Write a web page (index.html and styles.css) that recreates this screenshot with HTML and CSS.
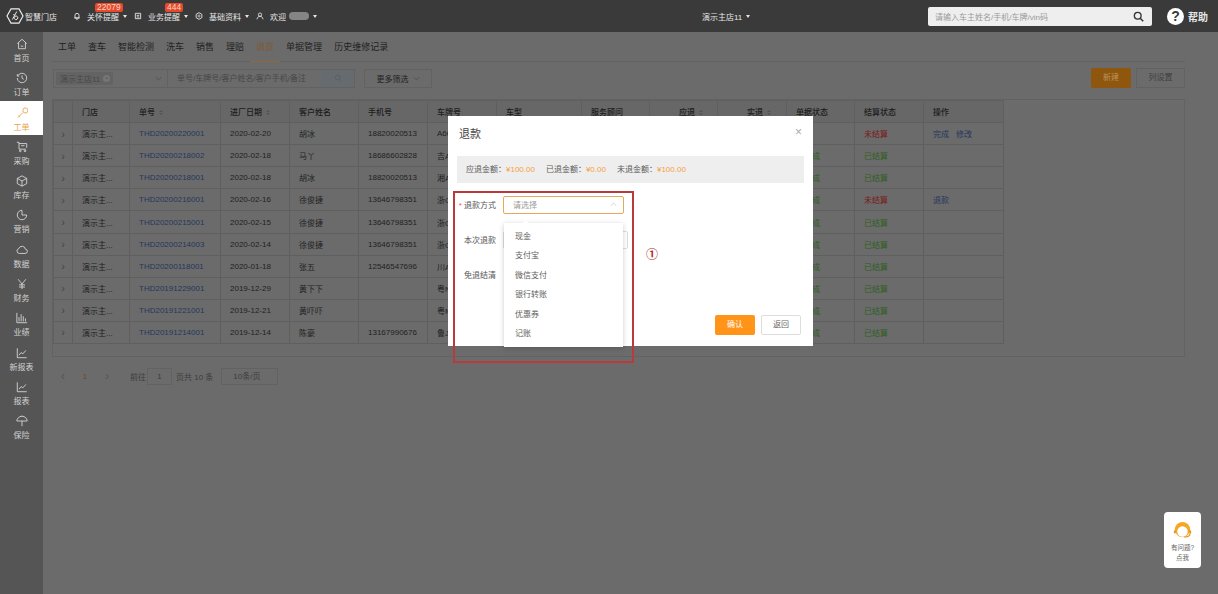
FILE: index.html
```html
<!DOCTYPE html>
<html lang="zh-CN">
<head>
  <meta charset="UTF-8">
  <title>退款</title>
  <link rel="stylesheet" href="styles.css">
</head>
<body>
  <header class="topbar">
    <div class="brand">
      <svg class="brand-logo" viewBox="0 0 20 18"><path d="M5.5 1h9L19 9l-4.500 8h-9L1 9z" fill="none" stroke="#eee" stroke-width="1.300"/><path d="M7 13 12 4M9.500 7.500H8M12.500 9.500a2 2 0 1 1-3.200 2.200 2 2 0 0 1 3.200-2.200z" fill="none" stroke="#eee" stroke-width="1.100"/></svg>
      <span>智慧门店</span>
    </div>
    <nav class="topnav">
      <div class="topnav-item">
        <svg class="top-icon" viewBox="0 0 12 12"><path d="M3 9V5a3 3 0 0 1 6 0v4zM2 9h8M5 11h2" fill="none" stroke="#eee" stroke-width="1.300"/></svg>
        <span>关怀提醒</span><i class="caret"></i>
        <b class="badge badge-wide">22079</b>
      </div>
      <div class="topnav-item">
        <svg class="top-icon" viewBox="0 0 12 12"><path d="M2 2h8v8H2zM4 5h4M4 7.500h4" fill="none" stroke="#eee" stroke-width="1.300"/></svg>
        <span>业务提醒</span><i class="caret"></i>
        <b class="badge badge-narrow">444</b>
      </div>
      <div class="topnav-item">
        <svg class="top-icon" viewBox="0 0 12 12"><path d="M6 1l4.300 2.500v5L6 11 1.700 8.500v-5z" fill="none" stroke="#eee" stroke-width="1.300"/><circle cx="6" cy="6" r="1.600" fill="none" stroke="#eee"/></svg>
        <span>基础资料</span><i class="caret"></i>
      </div>
      <div class="topnav-item">
        <svg class="top-icon" viewBox="0 0 12 12"><circle cx="6" cy="4" r="2.500" fill="none" stroke="#eee" stroke-width="1.200"/><path d="M1.500 11c.5-3 2-4.500 4.500-4.500s4 1.500 4.500 4.500" fill="none" stroke="#eee" stroke-width="1.200"/></svg>
        <span>欢迎</span><span class="user-blur"></span><i class="caret"></i>
      </div>
    </nav>
    <div class="store-switch"><span>演示主店11</span><i class="caret"></i></div>
    <div class="top-search">
      <span>请输入车主姓名/手机/车牌/vin码</span>
      <svg class="top-search-icon" viewBox="0 0 14 14"><circle cx="6" cy="6" r="4.300" fill="none" stroke="#333" stroke-width="1.700"/><path d="M9.200 9.200 13 13" stroke="#333" stroke-width="2"/></svg>
    </div>
    <div class="help">
      <span class="help-mark">?</span>
      <span>帮助</span>
    </div>
  </header>

  <div class="layout">
    <aside class="sidebar">
      <a class="side-item"><svg viewBox="0 0 14 14"><path d="M1.500 6.500 7 1.500l5.500 5M3 5.500V12.500h8V5.500M5.500 9.500h3"/></svg>首页</a>
      <a class="side-item"><svg viewBox="0 0 14 14"><path d="M2.200 4.300A5.500 5.500 0 1 1 1.500 7M1.500 2.500v2.300h2.300M7 4v3.300l2 1.200"/></svg>订单</a>
      <a class="side-item active"><svg viewBox="0 0 14 14"><path d="M8 6.500 2 12.500M3 10l1.500 1.500M8 3.500a3 3 0 1 1 2.500 3.500 3 3 0 0 1-2.500-3.500z"/></svg>工单</a>
      <a class="side-item"><svg viewBox="0 0 14 14"><path d="M1 1.500h2.500v8h8M3.500 3h9v5M6 5.500h4"/><circle cx="5" cy="11.500" r="1"/><circle cx="10.500" cy="11.500" r="1"/></svg>采购</a>
      <a class="side-item"><svg viewBox="0 0 14 14"><path d="M7 1l5.500 3v6L7 13l-5.500-3V4zM1.500 4 7 7l5.500-3M7 7v6"/></svg>库存</a>
      <a class="side-item"><svg viewBox="0 0 14 14"><path d="M7 1.500v5.500h5.500A5.500 5.500 0 1 1 7 1.500z"/></svg>营销</a>
      <a class="side-item"><svg viewBox="0 0 14 14"><path d="M4 11h6.500a2.500 2.500 0 0 0 .5-5 4 4 0 0 0-7.700-.7A2.900 2.900 0 0 0 4 11z"/></svg>数据</a>
      <a class="side-item"><svg viewBox="0 0 14 14"><path d="M2.500 1.500 7 7l4.500-5.500M7 7v6M3.500 8h7M3.500 10.500h7"/></svg>财务</a>
      <a class="side-item"><svg viewBox="0 0 14 14"><path d="M1 1v11.500h12M3.500 11V6M6 11V2.500M8.500 11V5M11 11V7.500"/></svg>业绩</a>
      <a class="side-item"><svg viewBox="0 0 14 14"><path d="M1.500 1.500v11h11M3.500 9.500l2.500-3 2 1.500 3.500-4"/></svg>新报表</a>
      <a class="side-item"><svg viewBox="0 0 14 14"><path d="M1.500 1.500v11h11M3.500 9.500l2.500-3 2 1.500 3.500-4"/></svg>报表</a>
      <a class="side-item"><svg viewBox="0 0 14 14"><path d="M1 7a6 5.500 0 0 1 12 0zM7 7v6M7 1V.5"/></svg>保险</a>
    </aside>

    <main class="content">
      <div class="tabs">
        <span class="tab">工单</span>
        <span class="tab">查车</span>
        <span class="tab">智能检测</span>
        <span class="tab">洗车</span>
        <span class="tab">销售</span>
        <span class="tab">理赔</span>
        <span class="tab current">退货</span>
        <span class="tab">单据管理</span>
        <span class="tab">历史维修记录</span>
      </div>

      <div class="filters">
        <div class="filter-group">
          <div class="filter-select">
            <span class="tag">演示主店11<i class="tag-x">×</i></span>
            <svg class="chev" viewBox="0 0 10 6"><path d="M1 1l4 4 4-4"/></svg>
          </div>
          <div class="filter-input">单号/车牌号/客户姓名/客户手机/备注</div>
          <div class="filter-btn"><svg viewBox="0 0 12 12"><circle cx="5.500" cy="5.500" r="3.500"/><path d="M8 8l2.500 2.500"/></svg></div>
        </div>
        <div class="more-btn">更多筛选 <svg class="chev" viewBox="0 0 10 6"><path d="M1 1l4 4 4-4"/></svg></div>
        <div class="filter-actions">
          <span class="new-btn">新建</span>
          <span class="col-btn">列设置</span>
        </div>
      </div>

      <div class="table-wrap">
        <table class="orders">
          <colgroup>
            <col class="c-exp"><col class="c-store"><col class="c-no"><col class="c-69"><col class="c-69"><col class="c-69"><col class="c-69"><col class="c-85"><col class="c-68"><col class="c-68"><col class="c-69"><col class="c-68"><col class="c-69"><col class="c-80">
          </colgroup>
          <thead>
            <tr>
              <th></th><th>门店</th><th>单号 <i class="sort"></i></th><th>进厂日期 <i class="sort"></i></th><th>客户姓名</th><th>手机号</th><th>车牌号</th><th>车型</th><th>服务顾问</th><th class="num">应退 <i class="sort"></i></th><th class="num">实退 <i class="sort"></i></th><th>单据状态</th><th>结算状态</th><th>操作</th>
            </tr>
          </thead>
          <tbody>
            <tr><td class="exp">›</td><td>演示主...</td><td class="no">THD20200220001</td><td>2020-02-20</td><td>胡冰</td><td>18820020513</td><td>A66</td><td></td><td></td><td></td><td></td><td></td><td class="unpaid">未结算</td><td class="ops"><a>完成</a><a>修改</a></td></tr>
            <tr><td class="exp">›</td><td>演示主...</td><td class="no">THD20200218002</td><td>2020-02-18</td><td>马丫</td><td>18686602828</td><td>吉A</td><td></td><td></td><td></td><td></td><td class="done">已完成</td><td class="paid">已结算</td><td></td></tr>
            <tr><td class="exp">›</td><td>演示主...</td><td class="no">THD20200218001</td><td>2020-02-18</td><td>胡冰</td><td>18820020513</td><td>湘A</td><td></td><td></td><td></td><td></td><td class="done">已完成</td><td class="paid">已结算</td><td></td></tr>
            <tr><td class="exp">›</td><td>演示主...</td><td class="no">THD20200216001</td><td>2020-02-16</td><td>徐俊捷</td><td>13646798351</td><td>浙C</td><td></td><td></td><td></td><td></td><td class="done">已完成</td><td class="unpaid">未结算</td><td class="ops"><a>退款</a></td></tr>
            <tr><td class="exp">›</td><td>演示主...</td><td class="no">THD20200215001</td><td>2020-02-15</td><td>徐俊捷</td><td>13646798351</td><td>浙C</td><td></td><td></td><td></td><td></td><td class="done">已完成</td><td class="paid">已结算</td><td></td></tr>
            <tr><td class="exp">›</td><td>演示主...</td><td class="no">THD20200214003</td><td>2020-02-14</td><td>徐俊捷</td><td>13646798351</td><td>浙C</td><td></td><td></td><td></td><td></td><td class="done">已完成</td><td class="paid">已结算</td><td></td></tr>
            <tr><td class="exp">›</td><td>演示主...</td><td class="no">THD20200118001</td><td>2020-01-18</td><td>张五</td><td>12546547696</td><td>川A</td><td></td><td></td><td></td><td></td><td class="done">已完成</td><td class="paid">已结算</td><td></td></tr>
            <tr><td class="exp">›</td><td>演示主...</td><td class="no">THD20191229001</td><td>2019-12-29</td><td>黄下下</td><td></td><td>粤N</td><td></td><td></td><td></td><td></td><td class="done">已完成</td><td class="paid">已结算</td><td></td></tr>
            <tr><td class="exp">›</td><td>演示主...</td><td class="no">THD20191221001</td><td>2019-12-21</td><td>黄吓吓</td><td></td><td>粤M</td><td></td><td></td><td></td><td></td><td class="done">已完成</td><td class="paid">已结算</td><td></td></tr>
            <tr><td class="exp">›</td><td>演示主...</td><td class="no">THD20191214001</td><td>2019-12-14</td><td>陈豪</td><td>13167990676</td><td>鲁J</td><td></td><td></td><td></td><td></td><td class="done">已完成</td><td class="paid">已结算</td><td></td></tr>
          </tbody>
        </table>
      </div>

      <div class="pager">
        <span class="pg-arrow">‹</span>
        <span class="pg-current">1</span>
        <span class="pg-arrow">›</span>
        <span class="pg-goto">前往</span>
        <span class="pg-input">1</span>
        <span>页共 10 条</span>
        <span class="pg-size">10条/页</span>
      </div>

      <div class="modal-layer">
        <section class="modal">
          <div class="modal-head">
            <h2>退款</h2>
            <span class="modal-close">×</span>
          </div>
          <div class="summary">
            <span>应退金额：<em>¥100.00</em></span>
            <span>已退金额：<em>¥0.00</em></span>
            <span>未退金额：<em>¥100.00</em></span>
          </div>
          <div class="form-rows">
            <div class="form-row">
              <label><i>*</i> 退款方式</label>
              <div class="select-box">
                <span>请选择</span>
                <svg class="chev" viewBox="0 0 10 6"><path d="M1 5l4-4 4 4"/></svg>
              </div>
            </div>
            <div class="form-row">
              <label>本次退款</label>
              <div class="amount-box"></div>
            </div>
            <div class="form-row">
              <label>免退结清</label>
            </div>
          </div>
          <div class="modal-foot">
            <span class="btn-ok">确认</span>
            <span class="btn-back">返回</span>
          </div>

          <ul class="dropdown">
            <li>现金</li>
            <li>支付宝</li>
            <li>微信支付</li>
            <li>银行转账</li>
            <li>优惠券</li>
            <li>记账</li>
          </ul>
          <div class="annotation"></div>
          <span class="annotation-no">①</span>
        </section>
      </div>

      <div class="support">
        <svg viewBox="0 0 22 22"><circle cx="11" cy="10" r="8" fill="#f5a623"/><circle cx="11" cy="12" r="5.500" fill="#fff"/><path d="M3 11v3M19 11v3" stroke="#e98f12" stroke-width="2"/><path d="M19 14c0 3-3 4-6 4" fill="none" stroke="#e98f12" stroke-width="1.200"/></svg>
        <span>有问题?</span>
        <span>点我</span>
      </div>
    </main>
  </div>
</body>
</html>
```

FILE: styles.css
```css
* {
  box-sizing: border-box;
}

html, body {
  height: 100%;
}

body {
  margin: 0;
  overflow: hidden;
  font-family: "Liberation Sans", "Noto Sans CJK SC", sans-serif;
  font-size: 8px;
  color: #1f1f1f;
  background-color: #6b6b6b;
}

.topbar {
  display: flex;
  align-items: center;
  height: 32px;
  background-color: #3a3a3a;
  color: #e6e6e6;
  position: relative;
}

.brand {
  display: flex;
  align-items: center;
  gap: 1px;
  width: 73px;
  padding-left: 6px;
}

.brand-logo {
  width: 18px;
  height: 16px;
}

.topnav {
  display: flex;
  width: 629px;
}

.topnav-item {
  display: flex;
  align-items: center;
  position: relative;
  margin-right: 7px;
}

.top-icon {
  width: 8px;
  height: 8px;
  margin-right: 6px;
}

.caret {
  width: 0;
  height: 0;
  margin-left: 4px;
  border: 2px solid transparent;
  border-top: 3px solid #e6e6e6;
  border-bottom: 0;
}

.badge {
  position: absolute;
  top: -8px;
  height: 9px;
  padding: 0 2px;
  border-radius: 2px;
  background-color: #e8492a;
  color: #f5d8c8;
  font-size: 8.500px;
  font-weight: normal;
  line-height: 9px;
}

.badge-wide {
  left: 22px;
}

.badge-narrow {
  left: 31px;
}

.user-blur {
  width: 20px;
  height: 8px;
  margin-left: 3px;
  border-radius: 4px;
  background-color: #858585;
}

.store-switch {
  display: flex;
  align-items: center;
  width: 226px;
}

.top-search {
  display: flex;
  align-items: center;
  justify-content: space-between;
  width: 224px;
  height: 19px;
  padding: 0 8px 0 7px;
  border-radius: 2px;
  background-color: #eee;
  color: #9a9a9a;
}

.top-search-icon {
  width: 11px;
  height: 11px;
}

.help {
  display: flex;
  align-items: center;
  gap: 4px;
  margin-left: 15px;
  font-size: 10px;
  font-weight: bold;
}

.help-mark {
  width: 17px;
  height: 17px;
  border-radius: 50%;
  background-color: #fff;
  color: #3a3a3a;
  font-size: 14px;
  line-height: 17px;
  text-align: center;
}

.layout {
  display: flex;
  height: 562px;
}

.sidebar {
  flex: none;
  width: 43px;
  background-color: #555;
}

.side-item {
  display: flex;
  flex-direction: column;
  align-items: center;
  height: 34.300px;
  padding-top: 6px;
  color: #d2d2d2;
  line-height: 11px;
}

.side-item svg {
  width: 12px;
  height: 12px;
  margin-bottom: 3px;
  fill: none;
  stroke: #dcdcdc;
  stroke-width: 1;
}

.side-item.active {
  background-color: #fff;
  color: #e8a04a;
}

.side-item.active svg {
  stroke: #e8a04a;
}

.content {
  flex: 1;
  position: relative;
  padding: 0 33px 0 9px;
}

.tabs {
  display: flex;
  height: 30px;
  border-bottom: 1px solid #626262;
  font-size: 9px;
}

.tab {
  height: 30px;
  padding: 0 6px;
  line-height: 30px;
}

.tab.current {
  color: #7f5a30;
  border-bottom: 1px solid #8f6a38;
}

.filters {
  display: flex;
  align-items: center;
  height: 20px;
  margin-top: 6px;
}

.filter-group {
  display: flex;
  width: 302px;
  height: 19px;
  margin-left: 1px;
  border: 1px solid #626262;
  color: #474747;
}

.filter-select {
  display: flex;
  align-items: center;
  justify-content: space-between;
  width: 114px;
  padding: 0 5px 0 2px;
  border-right: 1px solid #626262;
}

.tag {
  display: flex;
  align-items: center;
  gap: 3px;
  padding: 1px 3px 1px 4px;
  background-color: #636363;
}

.tag-x {
  width: 7px;
  height: 7px;
  border-radius: 50%;
  background-color: #767676;
  color: #5a5a5a;
  font-size: 6px;
  font-style: normal;
  line-height: 7px;
  text-align: center;
}

.chev {
  width: 7px;
  height: 5px;
  fill: none;
  stroke: #484848;
  stroke-width: 1;
}

.filter-input {
  flex: 1;
  padding-left: 9px;
  line-height: 17px;
}

.filter-btn {
  display: flex;
  align-items: center;
  justify-content: center;
  width: 33px;
  background-color: #666b70;
}

.filter-btn svg {
  width: 8px;
  height: 8px;
  fill: none;
  stroke: #4d5a66;
}

.more-btn {
  display: flex;
  align-items: center;
  justify-content: center;
  gap: 4px;
  width: 68px;
  height: 19px;
  margin-left: 9px;
  border: 1px solid #626262;
  font-size: 8px;
}

.filter-actions {
  display: flex;
  gap: 5px;
  margin-left: auto;
}

.new-btn {
  width: 40px;
  height: 20px;
  border-radius: 2px;
  background-color: #8f560d;
  color: #b8935f;
  line-height: 20px;
  text-align: center;
}

.col-btn {
  width: 49px;
  height: 20px;
  border: 1px solid #626262;
  color: #3f3f3f;
  line-height: 18px;
  text-align: center;
}

.table-wrap {
  height: 258px;
  margin-top: 11px;
  border: 1px solid #626262;
}

.orders {
  width: 950px;
  table-layout: fixed;
  border-collapse: collapse;
}

.c-exp { width: 19px; }
.c-store { width: 57px; }
.c-no { width: 91px; }
.c-69 { width: 69px; }
.c-85 { width: 85px; }
.c-68 { width: 68px; }
.c-80 { width: 80px; }

.orders th,
.orders td {
  height: 22.100px;
  padding: 0 0 0 9px;
  border: 1px solid #5f5f5f;
  text-align: left;
  white-space: nowrap;
  overflow: hidden;
}

.orders th {
  background-color: #676767;
  font-weight: 500;
  color: #1c1c1c;
}

.orders th.num {
  padding-left: 29px;
}

.sort {
  display: inline-flex;
  flex-direction: column;
  gap: 1px;
  margin-left: 2px;
  vertical-align: middle;
}

.sort::before,
.sort::after {
  content: "";
  width: 0;
  height: 0;
  border: 2px solid transparent;
}

.sort::before {
  border-top: 0;
  border-bottom: 2px solid #555;
}

.sort::after {
  border-bottom: 0;
  border-top: 2px solid #555;
}

.orders td.exp {
  padding: 0;
  color: #454545;
  font-size: 11px;
  text-align: center;
}

.no {
  color: #26375c;
}

.done,
.paid {
  color: #2f5f20;
}

.unpaid {
  color: #7a1818;
}

.ops a {
  margin-right: 7px;
  color: #26375c;
}

.pager {
  display: flex;
  align-items: center;
  height: 20px;
  margin-top: 9px;
  color: #3d3d3d;
}

.pg-arrow {
  width: 22px;
  color: #555;
  font-size: 12px;
  text-align: center;
}

.pg-current {
  width: 22px;
  color: #7a4618;
  text-align: center;
}

.pg-goto {
  margin-left: 12px;
}

.pg-input {
  width: 25px;
  height: 17px;
  margin: 0 4px 0 1px;
  border: 1px solid #626262;
  line-height: 15px;
  text-align: center;
}

.pg-size {
  width: 57px;
  height: 17px;
  margin-left: 8px;
  padding-left: 11px;
  border: 1px solid #626262;
  line-height: 15px;
}

.modal-layer {
  position: absolute;
  top: 84px;
  left: 0;
  width: 100%;
  display: flex;
  justify-content: center;
}

.modal {
  position: relative;
  width: 365px;
  height: 230px;
  padding: 0 9px;
  background-color: #fff;
  color: #5c5c5c;
}

.modal-head {
  display: flex;
  justify-content: space-between;
  height: 40px;
  padding: 10px 2px 0;
}

.modal-head h2 {
  margin: 0;
  font-size: 11px;
  font-weight: normal;
  color: #444;
  line-height: 16px;
}

.modal-close {
  color: #aaa;
  font-size: 12px;
  line-height: 12px;
}

.summary {
  display: flex;
  gap: 11px;
  height: 27px;
  padding-left: 9px;
  background-color: #eee;
  line-height: 27px;
}

.summary em {
  color: #f5a142;
  font-style: normal;
}

.form-rows {
  margin-top: 4px;
}

.form-row {
  display: flex;
  align-items: center;
  height: 35px;
}

.form-row label {
  width: 39px;
  margin-right: 7px;
  text-align: right;
  color: #555;
  white-space: nowrap;
}

.form-row label i {
  color: #e55;
  font-style: normal;
}

.select-box {
  display: flex;
  align-items: center;
  justify-content: space-between;
  width: 121px;
  height: 18px;
  padding: 0 6px 0 9px;
  border: 1px solid #e6a95a;
  border-radius: 2px;
  color: #9a9a9a;
}

.select-box .chev {
  stroke: #c0c4cc;
}

.amount-box {
  width: 125px;
  height: 18px;
  border: 1px solid #ddd;
  border-radius: 2px;
}

.modal-foot {
  display: flex;
  justify-content: flex-end;
  gap: 6px;
  margin-top: 23px;
  padding-right: 3px;
}

.btn-ok,
.btn-back {
  width: 40px;
  height: 20px;
  border-radius: 2px;
  line-height: 20px;
  text-align: center;
}

.btn-ok {
  background-color: #ff9419;
  color: #fff;
}

.btn-back {
  border: 1px solid #ddd;
  line-height: 18px;
  color: #666;
}

.dropdown {
  position: absolute;
  top: 107px;
  left: 56px;
  width: 119px;
  height: 124px;
  margin: 0;
  padding: 4px 0;
  list-style: none;
  background-color: #fff;
  box-shadow: 0 1px 5px rgba(0, 0, 0, 0.2);
}

.dropdown::before {
  content: "";
  position: absolute;
  top: -2px;
  left: 19px;
  width: 5px;
  height: 5px;
  background-color: #fff;
  transform: rotate(45deg);
}

.dropdown li {
  height: 19.400px;
  padding-left: 11px;
  line-height: 19.400px;
  color: #606060;
}

.annotation {
  position: absolute;
  top: 75px;
  left: 5px;
  width: 181px;
  height: 172px;
  border: 2px solid #b83a3a;
}

.annotation-no {
  position: absolute;
  top: 131px;
  left: 198px;
  color: #b02a2a;
  font-size: 12px;
  font-weight: bold;
  line-height: 16px;
}

.support {
  position: absolute;
  top: 480px;
  left: 1121px;
  display: flex;
  flex-direction: column;
  align-items: center;
  width: 37px;
  height: 56px;
  padding-top: 8px;
  border-radius: 4px;
  background-color: #fff;
  color: #666;
  font-size: 6.500px;
  line-height: 10px;
}

.support svg {
  width: 21px;
  height: 21px;
  margin-bottom: 2px;
}
```
